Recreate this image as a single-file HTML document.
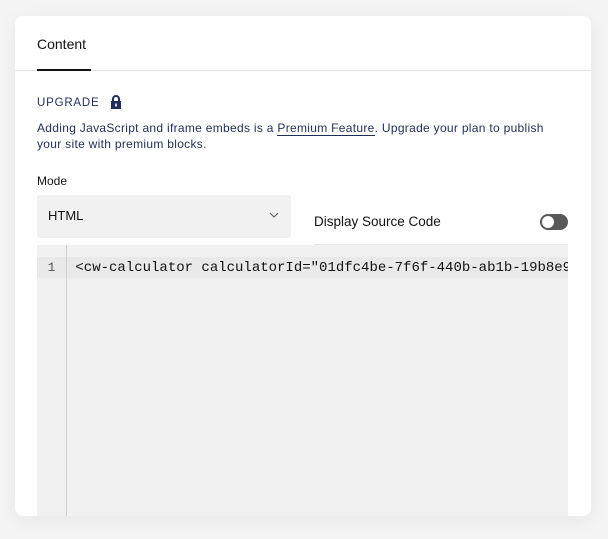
<!DOCTYPE html>
<html><head><style>
*{margin:0;padding:0;box-sizing:border-box}
body{width:608px;height:539px;background:#f4f4f4;font-family:"Liberation Sans",sans-serif;position:relative;overflow:hidden}
.card{position:absolute;left:15px;top:16px;width:576px;height:500px;background:#fff;border-radius:8px;box-shadow:0 4px 20px rgba(0,0,0,0.06);overflow:hidden}
.tab{position:absolute;left:22px;top:20px;font-size:14px;color:#111}
.ul{position:absolute;left:22px;top:53px;width:54px;height:2px;background:#111}
.div{position:absolute;left:0;top:54px;width:576px;height:1px;background:#e4e4e4}
.up{position:absolute;left:22px;top:81px;font-size:11.5px;letter-spacing:0.8px;color:#1f2d5a}
.lock{position:absolute;left:95px;top:79px}
.desc{position:absolute;left:22px;top:104px;font-size:12px;line-height:16px;color:#1f2d5a;width:560px;letter-spacing:0.3px;white-space:nowrap}
.desc u{text-decoration:none;border-bottom:1px solid #1f2d5a}
.mode{position:absolute;left:22px;top:158px;font-size:12px;color:#111}
.sel{position:absolute;left:22px;top:179px;width:254px;height:43px;background:#f1f1f1;border-radius:2px;font-size:13px;color:#111;padding:13px 0 0 11px}
.chev{position:absolute;left:254px;top:196px}
.dsc{position:absolute;left:299px;top:198px;font-size:13.5px;color:#111}
.line{position:absolute;left:299px;top:228px;width:254px;height:1px;background:#e6e6e6}
.tog{position:absolute;left:525px;top:198px;width:28px;height:16px;border-radius:8px;background:#595959}
.tog:after{content:"";position:absolute;left:2px;top:2px;width:12px;height:12px;border-radius:6px;background:#fff}
.ed{position:absolute;left:22px;top:229px;width:531px;height:271px;background:#f1f1f1;overflow:hidden}
.gut{position:absolute;left:0;top:0;width:30px;height:271px;border-right:1px solid #d0d0d0}
.row{position:absolute;left:0;top:12px;width:531px;height:21px;background:#e9e9e9;font-family:"Liberation Mono",monospace;font-size:14px;line-height:21px;color:#111;white-space:nowrap;overflow:hidden}
.row .n{display:inline-block;width:30px;text-align:center;color:#555;border-right:1px solid #d0d0d0;font-size:13px}
</style></head><body>
<div class="card">
<div class="tab">Content</div><div class="div"></div><div class="ul"></div>
<div class="up">UPGRADE</div>
<svg class="lock" width="12" height="14" viewBox="0 0 12 14"><path d="M3 6V4a3 3 0 0 1 6 0v2" fill="none" stroke="#1f2d5a" stroke-width="2"/><rect x="1" y="6" width="10" height="8" fill="#1f2d5a"/><rect x="5.2" y="8.5" width="1.6" height="3" fill="#fff"/></svg>
<div class="desc">Adding JavaScript and iframe embeds is a <u>Premium Feature</u>. Upgrade your plan to publish<br>your site with premium blocks.</div>
<div class="mode">Mode</div>
<div class="sel">HTML</div>
<svg class="chev" width="10" height="6" viewBox="0 0 10 6"><path d="M1 1l4 4 4-4" fill="none" stroke="#555" stroke-width="1"/></svg>
<div class="dsc">Display Source Code</div>
<div class="tog"></div>
<div class="line"></div>
<div class="ed"><div class="gut"></div><div class="row"><span class="n">1</span>&nbsp;&lt;cw-calculator calculatorId="01dfc4be-7f6f-440b-ab1b-19b8e9</div></div>
</div>
</body></html>
